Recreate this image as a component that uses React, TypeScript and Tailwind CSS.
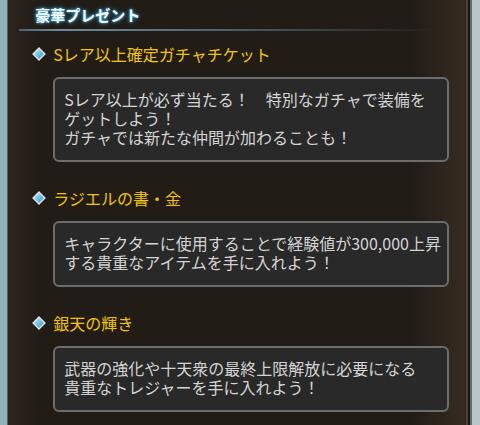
const items = [
  {
    title: "Sレア以上確定ガチャチケット",
    lines: ["Sレア以上が必ず当たる！　特別なガチャで装備を", "ゲットしよう！", "ガチャでは新たな仲間が加わることも！"],
  },
  {
    title: "ラジエルの書・金",
    lines: ["キャラクターに使用することで経験値が300,000上昇", "する貴重なアイテムを手に入れよう！"],
  },
  {
    title: "銀天の輝き",
    lines: ["武器の強化や十天衆の最終上限解放に必要になる", "貴重なトレジャーを手に入れよう！"],
  },
];

function Diamond() {
  return (
    <svg width="14" height="14" viewBox="0 0 14 14" className="shrink-0">
      <defs>
        <linearGradient id="dg" x1="0" y1="0" x2="1" y2="1">
          <stop offset="0" stopColor="#d8f2ff" />
          <stop offset="0.5" stopColor="#6cc0e8" />
          <stop offset="1" stopColor="#3a8fc4" />
        </linearGradient>
      </defs>
      <path d="M7 1 L13 7 L7 13 L1 7 Z" fill="url(#dg)" stroke="#e8e4dc" strokeWidth="1.3" />
    </svg>
  );
}

export default function App() {
  return (
    <div className="flex h-[425px] w-[480px] overflow-hidden font-['Noto_Sans_CJK_JP','Liberation_Sans',sans-serif]">
      {/* left frame */}
      <div className="w-[7px] bg-[#8fb1bb]" />
      <div className="w-[2px] bg-[#5d625f]" />
      <div className="w-[3px] bg-[#2a231d]" />

      <div className="flex-1 bg-[linear-gradient(90deg,#2c241d_0%,#221c17_6%,#221c17_88%,#2f261e_96%,#372c22_100%)]">
        {/* header */}
        <div className="pl-[24px] pt-[3px]">
          <h2 className="text-[15px] font-bold leading-[24px] text-[#f4fbff] [text-shadow:0_0_4px_#3fb6f0,0_0_2px_#3fb6f0]">
            豪華プレゼント
          </h2>
        </div>
        <div className="ml-[8px] mt-[2px] h-[2px] w-[420px] bg-[linear-gradient(90deg,#4a6472_0%,#6f8c9b_10%,#52656e_45%,#2a2a26_90%,transparent_100%)]" />

        <div className="flex flex-col pt-[13px] pl-[21px] pr-[17px]">
          {items.map((it, i) => (
            <div key={i} className={i > 0 ? "mt-[26px]" : ""}>
              <div className="flex items-center gap-[7px]">
                <Diamond />
                <span className="text-[16px] leading-[20px] text-[#f3c500]">{it.title}</span>
              </div>
              <div className="ml-[21px] mt-[13px] rounded-[6px] border-2 border-[#6e6d6b] bg-[#292929] pl-[9px] pr-[6px] pt-[11px] pb-[13px]">
                {it.lines.map((l, j) => (
                  <p key={j} className="whitespace-nowrap text-[16px] leading-[19px] text-[#d4d4d4]">
                    {l}
                  </p>
                ))}
              </div>
            </div>
          ))}
        </div>
      </div>

      {/* right frame */}
      <div className="w-[2px] bg-[#4a3f36]" />
      <div className="w-[2px] bg-[#1c1813]" />
      <div className="w-[2px] bg-[#6b6a66]" />
      <div className="w-[9px] bg-[#b8c6ca]" />
    </div>
  );
}
